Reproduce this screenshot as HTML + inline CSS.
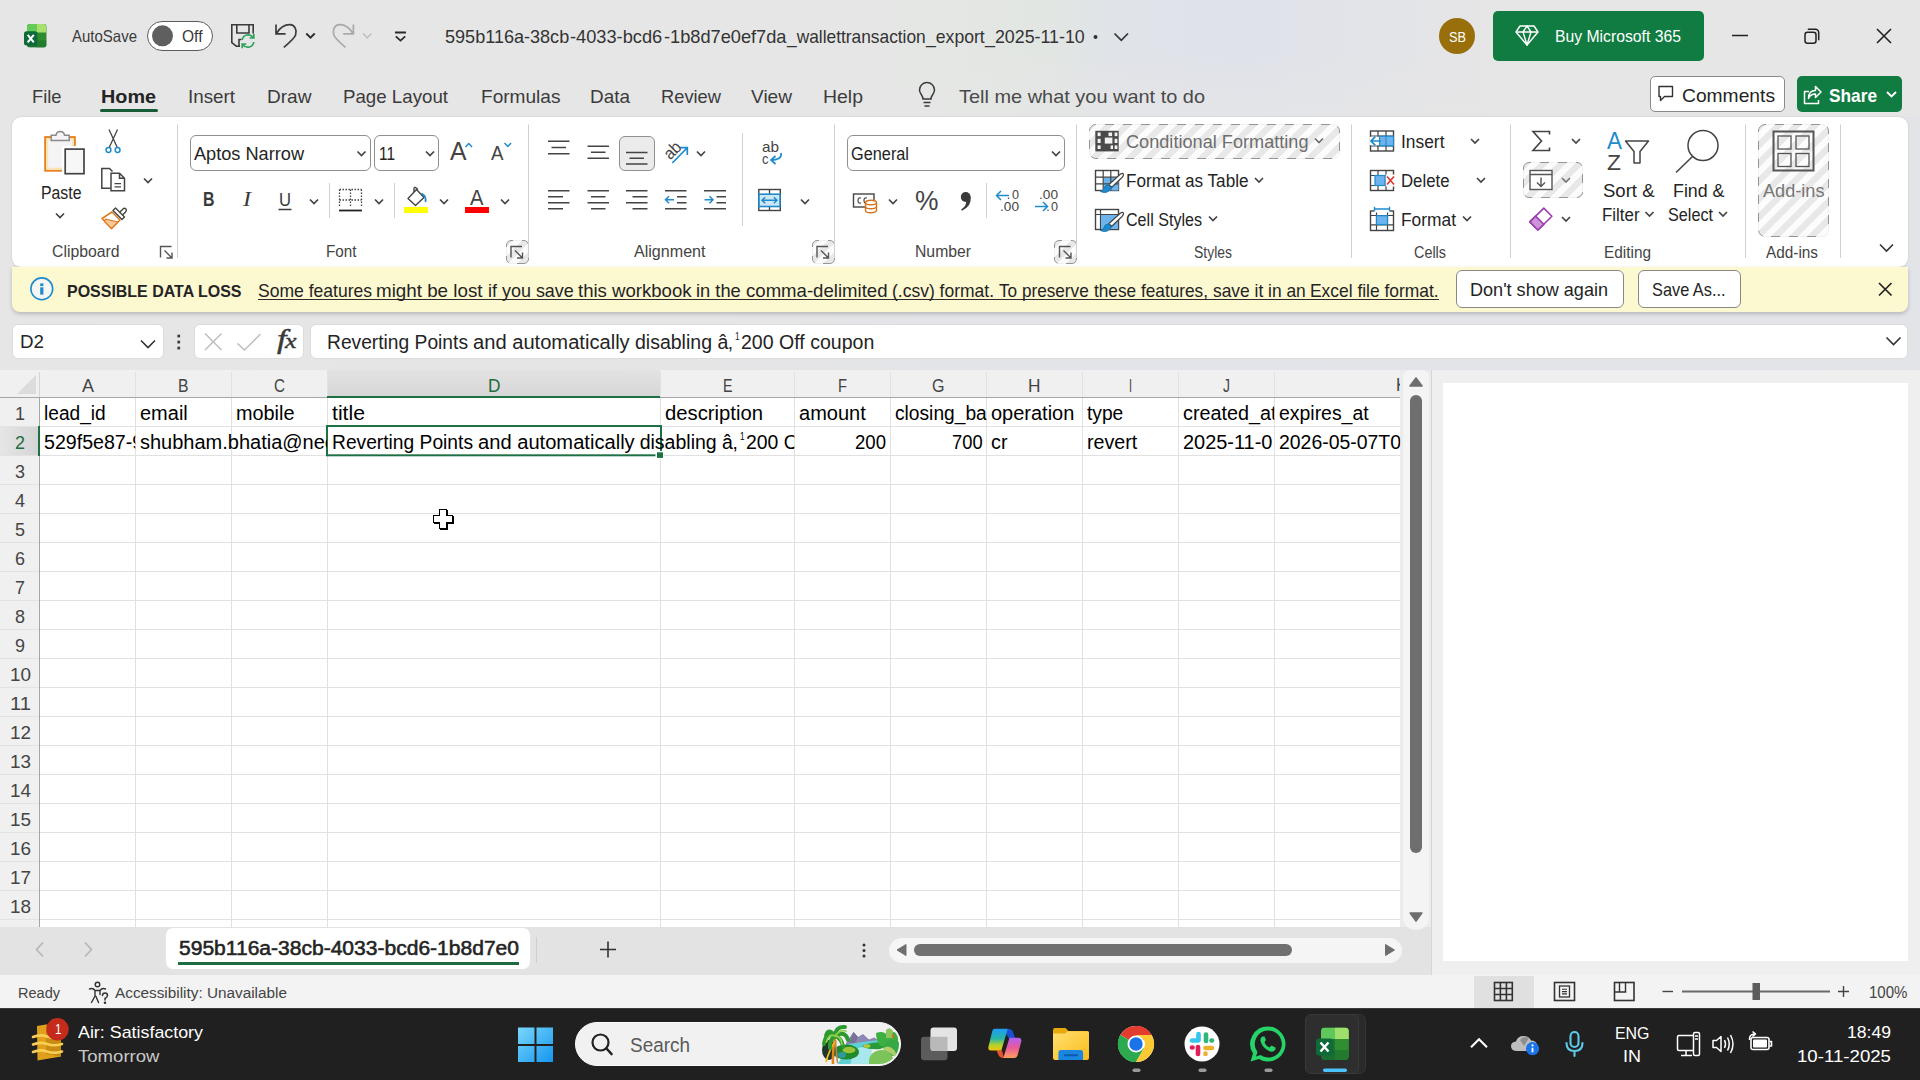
<!DOCTYPE html>
<html><head><meta charset="utf-8"><title>Excel</title>
<style>
html,body{margin:0;padding:0;}
body{width:1920px;height:1080px;overflow:hidden;position:relative;background:linear-gradient(90deg,#e6e6e6 0%,#e5e5e6 35%,#e2e4e9 60%,#e3e4e8 100%);font-family:"Liberation Sans", sans-serif;}
.b{position:absolute;box-sizing:border-box;}
.t{position:absolute;white-space:nowrap;transform-origin:0 50%;font-family:"Liberation Sans", sans-serif;}
svg.ov{position:absolute;left:0;top:0;}
</style></head>
<body>
<div class="b" style="left:0px;top:0px;width:1920px;height:117px;background:linear-gradient(to bottom,rgba(230,230,230,0) 45%,rgba(230,230,230,.6) 100%),linear-gradient(90deg,#e6e6e6 0%,#e6e6e6 44%,#e4e7e4 49%,#e2e6e3 54.5%,#e0e3e8 58%,#dfe2ea 65%,#e3e4e8 72%,#e6e6e6 79%,#e6e6e6 100%);"></div>
<div class="b" style="left:147px;top:21px;width:66px;height:30px;background:#fff;border:1.3px solid #5c5c5c;border-radius:15px;"></div>
<div class="b" style="left:1493px;top:11px;width:211px;height:50px;background:#107c41;border-radius:5px;"></div>
<div class="b" style="left:100px;top:109px;width:58px;height:3px;background:#185c37;border-radius:1.5px;"></div>
<div class="b" style="left:1650px;top:76px;width:135px;height:36px;background:#fff;border:1px solid #8a8a8a;border-radius:5px;"></div>
<div class="b" style="left:1797px;top:76px;width:105px;height:36px;background:#107c41;border-radius:5px;"></div>
<div class="b" style="left:12px;top:117px;width:1896px;height:149.5px;background:#fff;border-radius:9px;box-shadow:0 0 2px rgba(0,0,0,.18);"></div>
<div class="b" style="left:190px;top:135px;width:181px;height:36px;background:#fff;border:1px solid #8f8f8f;border-radius:6px;"></div>
<div class="b" style="left:374px;top:135px;width:65px;height:36px;background:#fff;border:1px solid #8f8f8f;border-radius:6px;"></div>
<div class="b" style="left:404px;top:207px;width:24px;height:6px;background:#ffff00;"></div>
<div class="b" style="left:465px;top:207px;width:24px;height:6px;background:#ff0000;"></div>
<div class="b" style="left:505.5px;top:240.0px;width:23px;height:23.5px;background:#e8e8e8;border:1px solid #969696;border-radius:5px;"></div>
<div class="b" style="left:505.0px;top:239.5px;width:24px;height:24.5px;background:repeating-linear-gradient(135deg,rgba(255,255,255,0) 0 6.2px,rgba(255,255,255,.86) 6.2px 12.7px);border-radius:5px;"></div>
<div class="b" style="left:619px;top:135.5px;width:35.5px;height:35px;background:#ebebeb;border:1px solid #8f8f8f;border-radius:6px;"></div>
<div class="b" style="left:811.5px;top:240.0px;width:23px;height:23.5px;background:#e8e8e8;border:1px solid #969696;border-radius:5px;"></div>
<div class="b" style="left:811.0px;top:239.5px;width:24px;height:24.5px;background:repeating-linear-gradient(135deg,rgba(255,255,255,0) 0 6.2px,rgba(255,255,255,.86) 6.2px 12.7px);border-radius:5px;"></div>
<div class="b" style="left:847px;top:135px;width:218px;height:36px;background:#fff;border:1px solid #8f8f8f;border-radius:6px;"></div>
<div class="b" style="left:1054.0px;top:240.0px;width:23px;height:23.5px;background:#e8e8e8;border:1px solid #969696;border-radius:5px;"></div>
<div class="b" style="left:1053.5px;top:239.5px;width:24px;height:24.5px;background:repeating-linear-gradient(135deg,rgba(255,255,255,0) 0 6.2px,rgba(255,255,255,.86) 6.2px 12.7px);border-radius:5px;"></div>
<div class="b" style="left:1089px;top:123.5px;width:251px;height:35.5px;background:#e8e8e8;border:1px solid #969696;border-radius:7px;"></div>
<div class="b" style="left:1088.5px;top:123.0px;width:252px;height:36.5px;background:repeating-linear-gradient(135deg,rgba(255,255,255,0) 0 6.2px,rgba(255,255,255,.86) 6.2px 12.7px);border-radius:7px;"></div>
<div class="b" style="left:1523px;top:162px;width:60px;height:35.5px;background:#e8e8e8;border:1px solid #969696;border-radius:6px;"></div>
<div class="b" style="left:1522.5px;top:161.5px;width:61px;height:36.5px;background:repeating-linear-gradient(135deg,rgba(255,255,255,0) 0 6.2px,rgba(255,255,255,.86) 6.2px 12.7px);border-radius:6px;"></div>
<div class="b" style="left:1758px;top:124px;width:71px;height:112.5px;background:#e8e8e8;border:1px solid #969696;border-radius:7px;"></div>
<div class="b" style="left:1757.5px;top:123.5px;width:72px;height:113.5px;background:repeating-linear-gradient(135deg,rgba(255,255,255,0) 0 6.2px,rgba(255,255,255,.86) 6.2px 12.7px);border-radius:7px;"></div>
<div class="b" style="left:12px;top:267px;width:1896px;height:44.5px;background:#fcf8d0;border-radius:0 0 8px 8px;box-shadow:0 2px 4px rgba(0,0,0,.20);"></div>
<div class="b" style="left:257.5px;top:298.6px;width:1181.2px;height:1.4px;background:#2a2a2a;"></div>
<div class="b" style="left:1456px;top:270.3px;width:167.5px;height:38.2px;background:#fff;border:1px solid #8a8886;border-radius:6px;"></div>
<div class="b" style="left:1638px;top:270.3px;width:102.5px;height:38.2px;background:#fff;border:1px solid #8a8886;border-radius:6px;"></div>
<div class="b" style="left:12px;top:323.5px;width:152px;height:35.5px;background:#fff;border:1px solid #dcdcdc;border-radius:6px;"></div>
<div class="b" style="left:194px;top:323.5px;width:110px;height:35.5px;background:#fff;border:1px solid #dcdcdc;border-radius:6px;"></div>
<div class="b" style="left:310px;top:323.5px;width:1598px;height:35.5px;background:#fff;border:1px solid #dcdcdc;border-radius:6px;"></div>
<div class="b" style="left:0px;top:370px;width:1400px;height:557px;background:#fff;"></div>
<div class="b" style="left:0px;top:370px;width:1400px;height:27.5px;background:#f0f0f0;"></div>
<div class="b" style="left:0px;top:397px;width:39px;height:530px;background:#f0f0f0;"></div>
<div class="b" style="left:327px;top:370px;width:333px;height:27px;background:linear-gradient(#e3e3e3,#d6d6d6);"></div>
<div class="b" style="left:0px;top:426.5px;width:39px;height:29px;background:linear-gradient(90deg,#e6e6e6,#d4d4d4);"></div>
<div class="b" style="left:1390px;top:370px;width:10px;height:26px;overflow:hidden;"><span class="t" style="left:5.5px;top:6.3px;font-size:18.5px;line-height:18.5px;color:#444;transform:scaleX(.9);">K</span></div>
<div class="b" style="left:1400px;top:369.5px;width:31.5px;height:557.5px;background:#ebebec;"></div>
<div class="b" style="left:1402.5px;top:369.5px;width:26.3px;height:560.3px;background:#f4f4f4;border-radius:7px 7px 13px 13px;"></div>
<div class="b" style="left:1410px;top:395px;width:12px;height:457.5px;background:#6e6e6e;border-radius:6px;"></div>
<div class="b" style="left:1432px;top:370px;width:488px;height:605px;background:#efefef;"></div>
<div class="b" style="left:1443px;top:383px;width:465px;height:578px;background:#fff;"></div>
<div class="b" style="left:0px;top:927px;width:1431px;height:48px;background:#e3e3e3;"></div>
<div class="b" style="left:1402.5px;top:900px;width:26.3px;height:29.8px;background:#f4f4f4;border-radius:0 0 13px 13px;"></div>
<div class="b" style="left:166px;top:927.5px;width:364px;height:41px;background:#fff;border-radius:7px;"></div>
<div class="b" style="left:178px;top:962px;width:340.5px;height:2.5px;background:#1d6b40;"></div>
<div class="b" style="left:889px;top:937.5px;width:513px;height:25px;background:#f5f5f5;border-radius:12.5px;"></div>
<div class="b" style="left:914px;top:943.8px;width:378px;height:12.4px;background:#707070;border-radius:6.2px;"></div>
<div class="b" style="left:0px;top:975px;width:1920px;height:33.5px;background:#f3f3f3;"></div>
<div class="b" style="left:1474px;top:976px;width:59.5px;height:32px;background:#e0e0e0;"></div>
<div class="b" style="left:0px;top:1008px;width:1920px;height:72px;background:#202020;"></div>
<div class="b" style="left:0px;top:1008px;width:1920px;height:1px;background:#3a3a3a;"></div>
<div class="b" style="left:575px;top:1022px;width:326px;height:44px;background:#f1f1f1;border:1.5px solid #fbfbfb;border-radius:22px;"></div>
<div class="b" style="left:1313px;top:1014px;width:52.5px;height:59.5px;background:#2a2a2a;border:1px solid #343434;border-radius:6px;"></div>
<div class="b" style="left:1305px;top:1014px;width:53.5px;height:59.5px;background:#2e2e2e;border:1px solid #3a3a3a;border-radius:6px;"></div>
<svg class="ov" width="1920" height="1080" viewBox="0 0 1920 1080">
<g><defs><clipPath id="xl"><rect x="27" y="24" width="19.500" height="23.500" rx="3"/></clipPath></defs><g clip-path="url(#xl)"><rect x="27" y="24" width="19.500" height="23.500" fill="#1f7534"/><rect x="36.500" y="24" width="10" height="23.500" fill="#2e8c2d"/><rect x="27" y="24" width="9.500" height="8.500" fill="#62cc5a"/><rect x="36.500" y="24" width="10" height="8.500" fill="#a6e16b"/><rect x="27" y="40.500" width="19.500" height="7" fill="#1c6f30" opacity=".55"/></g><rect x="24" y="31.300" width="13.500" height="14.300" rx="2.500" fill="#0e6a3a"/><path d="M27.700 34.800 L33.800 42.300 M33.800 34.800 L27.700 42.300" stroke="#fff" stroke-width="2" fill="none"/></g>
<circle cx="162.500" cy="35.800" r="10.500" fill="#5f5f5f"/>
<g fill="none" stroke="#3b3b3b" stroke-width="1.600" stroke-linejoin="miter"><path d="M240 46.200 H236.300 L231.800 42.600 V24.800 H253.200 V33.500"/><path d="M236.800 24.800 V33 H249 V24.800"/><path d="M239 46.200 V39.500 H241.500"/></g><g fill="none" stroke="#2ea25a" stroke-width="1.700"><path d="M242.200 40 A6 6 0 0 1 253 37.300 M253.800 33.800 V38 H249.600"/><path d="M253.800 42 A6 6 0 0 1 243 44.700 M242.200 48.200 V44 H246.400"/></g>
<path d="M276 24.400 V33.800 H285.600 M276.800 33 C280.500 27 286 24.600 290 24.700 C294.800 25 297.300 30 295.600 35 C294.500 38.200 290 42.200 283.800 47.300" fill="none" stroke="#3b3b3b" stroke-width="1.700"/>
<path d="M306.300 33.500 L310.500 37.700 L314.700 33.500" fill="none" stroke="#2b2b2b" stroke-width="1.800"/>
<path d="M353.400 24.400 V33.800 H343.200 M352.600 33 C348.900 27 343.400 24.600 339.400 24.700 C334.600 25 332.100 30 333.800 35 C334.900 38.200 339.400 42.200 345.500 47.300" fill="none" stroke="#a9a9a9" stroke-width="1.700"/>
<path d="M363 33.500 L367.200 37.700 L371.400 33.500" fill="none" stroke="#c2c2c2" stroke-width="1.700"/>
<path d="M395 32.500 H406 M395.800 36.300 L400.500 40.600 L405.200 36.300" fill="none" stroke="#2b2b2b" stroke-width="1.800"/>
<circle cx="1095.500" cy="37" r="2" fill="#333"/>
<path d="M1114.500 33.500 L1121.300 40.300 L1128 33.500" fill="none" stroke="#333" stroke-width="1.7"/>
<circle cx="1457" cy="36" r="18" fill="#986f0b"/>
<g fill="none" stroke="#fff" stroke-width="1.4" stroke-linejoin="round"><path d="M1520 26 H1534 L1538 32 L1527 45 L1516 32 Z"/><path d="M1516 32 H1538 M1523 32 L1527 26 L1531 32 M1523 32 L1527 45 L1531 32"/></g>
<path d="M1732 35.5 H1748" stroke="#222" stroke-width="1.5"/>
<g fill="none" stroke="#222" stroke-width="1.5"><rect x="1805" y="32.200" width="11" height="11" rx="2.500"/><path d="M1807.800 29.300 H1815.500 A3.200 3.200 0 0 1 1818.700 32.500 V40.200"/></g>
<path d="M1877 29 L1891 43 M1891 29 L1877 43" stroke="#222" stroke-width="1.6"/>
<g transform="translate(0,1)" fill="none" stroke="#3b3b3b" stroke-width="1.5"><path d="M923 98 C923 94 919.5 93 919.5 89 A7.5 7.5 0 0 1 934.5 89 C934.5 93 931 94 931 98 Z"/><path d="M923.5 101.5 H930.5 M924.5 105 H929.5"/></g>
<path d="M1659 86.5 H1672.5 V96.5 H1664.5 L1660.5 100.5 V96.5 H1659 Z" fill="none" stroke="#333" stroke-width="1.4" stroke-linejoin="round"/>
<g fill="none" stroke="#fff" stroke-width="1.5" stroke-linejoin="round"><path d="M1809 91.500 H1804.500 V103.500 H1818.500 V100"/><path d="M1808.500 98.500 C1808.500 93 1811.500 90.500 1815.500 90.500 V86.500 L1821 92 L1815.500 97.500 V94 C1812.500 94 1810 95 1808.500 98.500 Z"/></g>
<path d="M1887 92 L1891.5 96.5 L1896 92" fill="none" stroke="#fff" stroke-width="1.8"/>
<g><rect x="45.2" y="137.1" width="29.6" height="33.6" fill="#f4f4f6" stroke="#e8821e" stroke-width="2"/><rect x="47.2" y="139.1" width="25.6" height="29.6" fill="none" stroke="#fbe4b4" stroke-width="2"/><path d="M51.2 140.600 V135.200 H56 A4.300 4.300 0 0 1 64.500 135.200 H69.200 V140.600 Z" fill="#f4f4f6" stroke="#8a8a8a" stroke-width="1.500"/><rect x="62" y="146" width="25" height="30" fill="#fff"/><rect x="65.2" y="149.1" width="18.800" height="24.600" fill="#f7f7f8" stroke="#444" stroke-width="1.700"/></g>
<path d="M56 213.5 L60 217.5 L64 213.5" fill="none" stroke="#444" stroke-width="1.7"/>
<g fill="none" stroke-width="1.5"><path d="M109 129.500 L117.300 147.500 M117.500 129.500 L109.200 147.500" stroke="#444" stroke-width="1.300"/><circle cx="108.500" cy="150" r="2.400" stroke="#1e8bcd"/><circle cx="117.600" cy="150" r="2.400" stroke="#1e8bcd"/></g>
<g fill="none" stroke="#444" stroke-width="1.500"><path d="M110.500 188.300 H101.800 V168.500 H109.500 L112.500 171.500"/><path d="M111 173.200 H119.500 L124.500 178.200 V190.800 H111 Z M119.500 173.200 V178.200 H124.500" fill="#fff"/><path d="M114.500 183.600 H121 M114.500 186.800 H121" stroke-width="1.300"/></g>
<path d="M144 178.5 L148 182.5 L152 178.5" fill="none" stroke="#444" stroke-width="1.7"/>
<g stroke-linejoin="round"><path d="M112 212 L120 220 L111.500 228.500 L102 218.500 Z" fill="#fff" stroke="#e07a1c" stroke-width="1.500"/><path d="M105.500 219 L118 222 L111.500 228.500 L104.500 221.500 Z" fill="#f8c79a" stroke="#e07a1c" stroke-width="1.200"/><path d="M118.500 213.500 L123 209 Q124.500 207.500 126 209 Q127 210.500 125.500 212 L121 216.500" fill="#fff" stroke="#444" stroke-width="1.400"/><path d="M113 210.500 L115.500 208 L124.500 217 L122 219.500 Z" fill="#fff" stroke="#444" stroke-width="1.400"/></g>
<path d="M160.5 257.5 V246.5 H171.5 M164.5 250.5 L171.5 257.5 M166.5 258.0 H172.0 V252.5" fill="none" stroke="#555" stroke-width="1.4"/>
<path d="M177.5 124.5 V258" stroke="#d1d1d1" stroke-width="1"/>
<path d="M357.5 151.5 L361.5 155.5 L365.5 151.5" fill="none" stroke="#444" stroke-width="1.7"/>
<path d="M426 151.5 L430 155.5 L434 151.5" fill="none" stroke="#444" stroke-width="1.7"/>
<path d="M465.5 147 L468.800 143.500 L472 147" fill="none" stroke="#1e8bcd" stroke-width="1.5"/>
<path d="M504.5 143 L507.800 146.500 L511 143" fill="none" stroke="#1e8bcd" stroke-width="1.5"/>
<path d="M278.5 209.500 H291.500" stroke="#3a3a3a" stroke-width="1.5"/>
<path d="M310 199.5 L314 203.5 L318 199.5" fill="none" stroke="#444" stroke-width="1.7"/>
<path d="M329.5 183 V218" stroke="#d1d1d1" stroke-width="1"/>
<g fill="none" stroke="#444"><path d="M339.500 189.500 H361.500 M339.500 189.500 V207 M361.500 189.500 V207 M350.500 189.500 V207 M339.500 200 H361.500" stroke-width="1.3" stroke-dasharray="1.5 1.5"/><path d="M339 210.500 H362" stroke-width="1.800" stroke="#222"/></g>
<path d="M375 199.5 L379 203.5 L383 199.5" fill="none" stroke="#444" stroke-width="1.7"/>
<path d="M394.5 183 V218" stroke="#d1d1d1" stroke-width="1"/>
<g fill="none" stroke="#444" stroke-width="1.4" stroke-linejoin="round"><path d="M408 198.500 L416.500 189.500 L424 197.500 L415.500 205.500 Z" fill="#fff"/><path d="M414 192 V188.500 Q414 187 415.500 187.500 L418 189.500"/></g><path d="M421.5 193.500 Q426.500 195.500 425.500 202" fill="none" stroke="#1e8bcd" stroke-width="1.800"/>
<path d="M440 199.5 L444 203.5 L448 199.5" fill="none" stroke="#444" stroke-width="1.7"/>
<path d="M501 199.5 L505 203.5 L509 199.5" fill="none" stroke="#444" stroke-width="1.7"/>
<path d="M511 257.5 V246.5 H522 M515 250.5 L522 257.5 M517 258.0 H522.5 V252.5" fill="none" stroke="#555" stroke-width="1.4"/>
<path d="M528.5 124.5 V258" stroke="#d1d1d1" stroke-width="1"/>
<path d="M548 141.2 H569.5 M551.5 147.5 H566 M548 153.8 H569.5 " fill="none" stroke="#444" stroke-width="1.5"/>
<path d="M587.5 146.2 H609 M591 152.2 H605.5 M587.5 158.2 H609 " fill="none" stroke="#444" stroke-width="1.5"/>
<path d="M626 152.5 H647.5 M629.5 158.2 H644 M626 164 H647.5 " fill="none" stroke="#444" stroke-width="1.5"/>
<path d="M672.300 163 L687 148 M680 147.700 H687.300 V155" fill="none" stroke="#1e8bcd" stroke-width="1.700"/>
<path d="M697 151.5 L701 155.5 L705 151.5" fill="none" stroke="#444" stroke-width="1.7"/>
<path d="M548 190.8 H569.5 M548 196.8 H563 M548 202.8 H569.5 M548 208.8 H563 " fill="none" stroke="#444" stroke-width="1.5"/>
<path d="M587.5 190.8 H609 M591 196.8 H605.5 M587.5 202.8 H609 M591 208.8 H605.5 " fill="none" stroke="#444" stroke-width="1.5"/>
<path d="M626 190.8 H647.5 M632.5 196.8 H647.5 M626 202.8 H647.5 M632.5 208.8 H647.5 " fill="none" stroke="#444" stroke-width="1.5"/>
<path d="M665 190.8 H686.5 M677 196.8 H686.5 M677 202.8 H686.5 M665 208.8 H686.5 " fill="none" stroke="#444" stroke-width="1.5"/>
<path d="M665.5 199.800 H674 M669 196.300 L665.500 199.800 L669 203.300" fill="none" stroke="#1e8bcd" stroke-width="1.5"/>
<path d="M704 190.8 H726 M716.5 196.8 H726 M716.5 202.8 H726 M704 208.8 H726 " fill="none" stroke="#444" stroke-width="1.5"/>
<path d="M704.5 199.800 H713 M709.500 196.300 L713 199.800 L709.500 203.300" fill="none" stroke="#1e8bcd" stroke-width="1.5"/>
<path d="M742.5 133 V226" stroke="#d1d1d1" stroke-width="1"/>
<path d="M781 153 Q782.500 159.500 771.500 160 M775.500 156 L771 160 L775.500 164" fill="none" stroke="#1e8bcd" stroke-width="1.700"/>
<g fill="none"><rect x="758.800" y="189.500" width="21.500" height="21" stroke="#444" stroke-width="1.4"/><path d="M769.500 189.500 V194 M769.500 206.500 V210.500" stroke="#444" stroke-width="1.3"/><rect x="759" y="194.200" width="21" height="12.300" fill="#cfe6f7" stroke="#1e8bcd" stroke-width="1.600"/><path d="M762 200.300 H777 M765.200 197.300 L762 200.300 L765.200 203.300 M773.800 197.300 L777 200.300 L773.800 203.300" stroke="#1e8bcd" stroke-width="1.500"/></g>
<path d="M801 199.5 L805 203.5 L809 199.5" fill="none" stroke="#444" stroke-width="1.7"/>
<path d="M817 257.5 V246.5 H828 M821 250.5 L828 257.5 M823 258.0 H828.5 V252.5" fill="none" stroke="#555" stroke-width="1.4"/>
<path d="M834.5 124.5 V258" stroke="#d1d1d1" stroke-width="1"/>
<path d="M1052 151.5 L1056 155.5 L1060 151.5" fill="none" stroke="#444" stroke-width="1.7"/>
<g fill="none"><rect x="853.500" y="194" width="20.500" height="13" stroke="#444" stroke-width="1.4"/><path d="M861 198 Q858 197 858 200.500 Q858 204 861 203 M867 198 Q864 197 864 200.500 Q864 204 867 203" stroke="#444" stroke-width="1.2"/><path d="M865.500 202.500 V210.500 A5.500 2.300 0 0 0 876.500 210.500 V202.500" fill="#fff" stroke="#d9731b" stroke-width="1.4"/><ellipse cx="871" cy="202.500" rx="5.500" ry="2.300" fill="#fff" stroke="#d9731b" stroke-width="1.4"/><path d="M865.500 206.500 A5.500 2.300 0 0 0 876.500 206.500" stroke="#d9731b" stroke-width="1.4"/></g>
<path d="M889 199.5 L893 203.5 L897 199.5" fill="none" stroke="#444" stroke-width="1.7"/>
<circle cx="965.700" cy="197" r="4.900" fill="#3a3a3a"/><path d="M970.600 196.500 Q972 206 961.800 210.800 L961.200 209.600 Q967.500 205.500 966 199 Z" fill="#3a3a3a"/>
<path d="M986.5 183 V218" stroke="#d1d1d1" stroke-width="1"/>
<path d="M996.500 195.500 H1009 M1001 191 L996.500 195.500 L1001 200" fill="none" stroke="#1e8bcd" stroke-width="1.5"/><circle cx="1008.500" cy="198.200" r="0.8" fill="#444"/>
<path d="M1035 206.500 H1047.500 M1043 202 L1047.500 206.500 L1043 211" fill="none" stroke="#1e8bcd" stroke-width="1.5"/><circle cx="1048" cy="210.200" r="0.8" fill="#444"/>
<path d="M1059.5 257.5 V246.5 H1070.5 M1063.5 250.5 L1070.5 257.5 M1065.5 258.0 H1071.0 V252.5" fill="none" stroke="#555" stroke-width="1.4"/>
<path d="M1076.5 124.5 V258" stroke="#d1d1d1" stroke-width="1"/>
<g><rect x="1095.300" y="130.800" width="23.400" height="20.600" fill="#4a4a4a"/><rect x="1097.6" y="132.5" width="3" height="3.6" fill="#f2f2f2"/><rect x="1097.6" y="138.8" width="3" height="4.2" fill="#f2f2f2"/><rect x="1097.6" y="145.4" width="3" height="3.6" fill="#f2f2f2"/><rect x="1114.6" y="132.5" width="2.8" height="3.6" fill="#f2f2f2"/><rect x="1114.6" y="138.8" width="2.8" height="4.2" fill="#f2f2f2"/><rect x="1114.6" y="145.4" width="2.8" height="3.6" fill="#f2f2f2"/><rect x="1108.5" y="132.5" width="3.6" height="3.6" fill="#f2f2f2"/><rect x="1104.8" y="137.6" width="7.6" height="6" fill="#f2f2f2"/><rect x="1110.6" y="145.4" width="2.4" height="3.6" fill="#f2f2f2"/></g>
<path d="M1315 138.5 L1319 142.5 L1323 138.5" fill="none" stroke="#6e6e6e" stroke-width="1.7"/>
<g><rect x="1095.5" y="170.5" width="23" height="20" fill="#fff" stroke="#444" stroke-width="1.4"/><rect x="1103.5" y="177.5" width="15" height="13" fill="#6db3ee"/><path d="M1095.5 177.1 H1118.5 M1095.5 183.8 H1118.5 M1103.2 170.5 V190.5 M1110.8 170.5 V190.5" stroke="#444" stroke-width="1.2" fill="none"/></g>
<g><path d="M1109.0 184.5 L1120.5 174.0 Q1123.0 172.5 1123.5 174.5 Q1123.5 176.0 1122.0 177.5 L1111.5 187.5 Z" fill="#fff" stroke="#444" stroke-width="1.2" stroke-linejoin="round"/><path d="M1108.5 185.0 Q1104.5 185.0 1104.0 188.5 Q1103.5 191.0 1100.5 191.5 Q1107.5 194.5 1111.5 188.0 Z" fill="#1e8bcd" stroke="#1a78b3" stroke-width="1"/></g>
<path d="M1255 178.0 L1259 182.0 L1263 178.0" fill="none" stroke="#444" stroke-width="1.7"/>
<g><rect x="1095.500" y="209.500" width="23" height="20" fill="#fff" stroke="#444" stroke-width="1.4"/><path d="M1095.500 214.500 H1118.500 M1100.500 209.500 V229.500" stroke="#444" stroke-width="1.2"/><rect x="1101" y="215" width="17" height="14" fill="#6db3ee"/></g>
<g><path d="M1109.0 223.5 L1120.5 213.0 Q1123.0 211.5 1123.5 213.5 Q1123.5 215.0 1122.0 216.5 L1111.5 226.5 Z" fill="#fff" stroke="#444" stroke-width="1.2" stroke-linejoin="round"/><path d="M1108.5 224.0 Q1104.5 224.0 1104.0 227.5 Q1103.5 230.0 1100.5 230.5 Q1107.5 233.5 1111.5 227.0 Z" fill="#1e8bcd" stroke="#1a78b3" stroke-width="1"/></g>
<path d="M1209 216.5 L1213 220.5 L1217 216.5" fill="none" stroke="#444" stroke-width="1.7"/>
<path d="M1351.5 124.5 V258" stroke="#d1d1d1" stroke-width="1"/>
<g fill="none" stroke="#444"><rect x="1370.5" y="131" width="23" height="20" stroke-width="1.4" fill="#fff"/><path d="M1370.5 136 H1393.5 M1370.5 146 H1393.5 M1378.0 131 V151 M1386.0 131 V151" stroke-width="1.2"/></g>
<rect x="1379.500" y="136.200" width="14" height="9.600" fill="#6db3ee" stroke="#1e8bcd" stroke-width="1.200"/><path d="M1386 136.200 V145.800" stroke="#1e8bcd" stroke-width="1"/><rect x="1369.500" y="136.800" width="9.400" height="8.400" fill="#fff"/><path d="M1371 141 H1381 M1375.300 136.700 L1371 141 L1375.300 145.300" fill="none" stroke="#1e8bcd" stroke-width="1.700"/><path d="M1370 134 H1377 V148 H1370 Z" fill="#fff" stroke="none" opacity="0"/>
<path d="M1471 139.0 L1475 143.0 L1479 139.0" fill="none" stroke="#444" stroke-width="1.7"/>
<g fill="none" stroke="#444"><rect x="1370.5" y="170.5" width="23" height="20" stroke-width="1.4" fill="#fff"/><path d="M1370.5 175.5 H1393.5 M1370.5 185.5 H1393.5 M1378.0 170.5 V190.5 M1386.0 170.5 V190.5" stroke-width="1.2"/></g>
<rect x="1375" y="175.500" width="10" height="10" fill="#6db3ee" stroke="#1e8bcd" stroke-width="1.2"/><rect x="1385.800" y="174.500" width="9" height="12" fill="#fff"/><path d="M1387 176.500 L1394 184.500 M1394 176.500 L1387 184.500" stroke="#e0362c" stroke-width="1.6" fill="none"/>
<path d="M1477 178.0 L1481 182.0 L1485 178.0" fill="none" stroke="#444" stroke-width="1.7"/>
<g fill="none" stroke="#444"><rect x="1370.500" y="211" width="23" height="19.500" stroke-width="1.4" fill="#fff"/><path d="M1370.500 215.500 H1393.500 M1370.500 224.800 H1393.500 M1376.500 211 V230.500 M1387.500 211 V230.500" stroke-width="1.2"/></g><rect x="1374.200" y="209.500" width="15.600" height="3" fill="#fff"/><rect x="1376.500" y="215.700" width="11" height="8.800" fill="#6db3ee" stroke="#1e8bcd" stroke-width="1.200"/><path d="M1374.500 209 H1389.500 M1374.500 206.800 V211.200 M1389.500 206.800 V211.200" stroke="#1e8bcd" stroke-width="1.400" fill="none"/>
<path d="M1463 216.5 L1467 220.5 L1471 216.5" fill="none" stroke="#444" stroke-width="1.7"/>
<path d="M1510.5 124.5 V258" stroke="#d1d1d1" stroke-width="1"/>
<path d="M1549.500 134.500 V131.500 H1533 L1541.500 141 L1533 150.500 H1549.500 V147.500" fill="none" stroke="#444" stroke-width="1.600" stroke-linejoin="miter"/>
<path d="M1572 139.0 L1576 143.0 L1580 139.0" fill="none" stroke="#444" stroke-width="1.7"/>
<g fill="none" stroke="#555" stroke-width="1.4"><rect x="1530" y="170.500" width="22" height="19" fill="#fff"/><path d="M1530 174.500 H1552 M1541 177.500 V186 M1537 182.500 L1541 186.500 L1545 182.500"/></g>
<path d="M1562 178.0 L1566 182.0 L1570 178.0" fill="none" stroke="#777" stroke-width="1.7"/>
<g stroke-linejoin="round"><path d="M1529.800 221.900 L1543.800 208.100 L1551.900 216.300 L1537.900 230 Z" fill="#fff" stroke="#9b3db0" stroke-width="1.600"/><path d="M1529.800 221.900 L1535.600 216.100 L1543.800 224.300 L1537.900 230 Z" fill="#cf93da" stroke="#9b3db0" stroke-width="1.600"/></g>
<path d="M1562 217.0 L1566 221.0 L1570 217.0" fill="none" stroke="#444" stroke-width="1.7"/>
<path d="M1625.500 141 H1648.500 L1640 151.500 V163 H1634 V151.500 Z" fill="#fff" stroke="#444" stroke-width="1.5" stroke-linejoin="round"/>
<path d="M1645.5 212.0 L1649.5 216.0 L1653.5 212.0" fill="none" stroke="#444" stroke-width="1.7"/>
<circle cx="1703" cy="145.500" r="15" fill="none" stroke="#444" stroke-width="1.500"/><path d="M1692.500 156.500 L1676 172.500" stroke="#444" stroke-width="1.600"/>
<path d="M1719 212.0 L1723 216.0 L1727 212.0" fill="none" stroke="#444" stroke-width="1.7"/>
<path d="M1745.5 124.5 V258" stroke="#d1d1d1" stroke-width="1"/>
<g fill="none" stroke="#555"><rect x="1773.500" y="131.500" width="40" height="39" stroke-width="2"/><rect x="1778" y="136" width="13" height="13" stroke-width="1.300"/><rect x="1796" y="136" width="13" height="13" stroke-width="1.300"/><rect x="1778" y="153.500" width="13" height="13" stroke-width="1.300"/><rect x="1796" y="153.500" width="13" height="13" stroke-width="1.300"/></g>
<path d="M1840.5 124.5 V258" stroke="#d1d1d1" stroke-width="1"/>
<path d="M1880 244.500 L1886.500 251 L1893 244.500" fill="none" stroke="#333" stroke-width="1.600"/>
<circle cx="41.800" cy="288.800" r="10.900" fill="#f6f6f2" stroke="#1e8bcd" stroke-width="1.600"/><rect x="40.200" y="287.300" width="3.200" height="7.300" fill="#1e8bcd"/><rect x="40.200" y="283.400" width="3.200" height="2.700" fill="#1e8bcd"/>
<path d="M1879 283 L1891.500 295.500 M1891.500 283 L1879 295.500" stroke="#222" stroke-width="1.700"/>
<path d="M141 340.500 L148 347.500 L155 340.500" fill="none" stroke="#333" stroke-width="1.600"/>
<rect x="177.400" y="334.700" width="2.700" height="2.700" fill="#3a3a3a"/><rect x="177.400" y="340.700" width="2.700" height="2.700" fill="#3a3a3a"/><rect x="177.400" y="346.700" width="2.700" height="2.700" fill="#3a3a3a"/>
<path d="M205 333.500 L221.500 350 M221.500 333.500 L205 350" stroke="#bdbdbd" stroke-width="1.500"/><path d="M237.500 343.500 L244.500 350 L260.500 334" fill="none" stroke="#bdbdbd" stroke-width="1.500"/>
<path d="M1886.500 337.500 L1893.500 344.500 L1900.500 337.500" fill="none" stroke="#333" stroke-width="1.600"/>
<path d="M36 375 V394 H17 Z" fill="#dcdcdc"/>
<path d="M39 426.5 H1400 M39 455.5 H1400 M39 484.5 H1400 M39 513.5 H1400 M39 542.5 H1400 M39 571.5 H1400 M39 600.5 H1400 M39 629.5 H1400 M39 658.5 H1400 M39 687.5 H1400 M39 716.5 H1400 M39 745.5 H1400 M39 774.5 H1400 M39 803.5 H1400 M39 832.5 H1400 M39 861.5 H1400 M39 890.5 H1400 M39 919.5 H1400 M135.5 397 V927 M231.5 397 V927 M327.5 397 V927 M660.5 397 V927 M794.5 397 V927 M890.5 397 V927 M986.5 397 V927 M1082.5 397 V927 M1178.5 397 V927 M1274.5 397 V927 " stroke="#e1e1e1" stroke-width="1" fill="none"/>
<path d="M135.5 372 V397 M231.5 372 V397 M327.5 372 V397 M660.5 372 V397 M794.5 372 V397 M890.5 372 V397 M986.5 372 V397 M1082.5 372 V397 M1178.5 372 V397 M1274.5 372 V397 M0 426.5 H39 M0 455.5 H39 M0 484.5 H39 M0 513.5 H39 M0 542.5 H39 M0 571.5 H39 M0 600.5 H39 M0 629.5 H39 M0 658.5 H39 M0 687.5 H39 M0 716.5 H39 M0 745.5 H39 M0 774.5 H39 M0 803.5 H39 M0 832.5 H39 M0 861.5 H39 M0 890.5 H39 M0 919.5 H39 " stroke="#e2e2e2" stroke-width="1" fill="none"/>
<path d="M0 397.5 H1400 M39.5 397 V927" stroke="#a6a6a6" stroke-width="1" fill="none"/><path d="M39.5 372 V397" stroke="#d4d4d4" stroke-width="1"/>
<path d="M327 397 H660" stroke="#1f7145" stroke-width="2"/>
<path d="M39 426 V456" stroke="#1f7145" stroke-width="2"/>
<rect x="327" y="426" width="334" height="29.3" fill="none" stroke="#1f7145" stroke-width="2"/>
<rect x="655.5" y="451" width="8" height="7.5" fill="#fff"/><rect x="657" y="452.3" width="6" height="5.6" fill="#1f7145"/>
<path d="M439 509 H447 V510 H448 V515 H453 V516 H454 V524 H448 V530 H440 V529 H439 V524 H434 V523 H433 V515 H439 Z" fill="#000"/><path d="M440 510 H446 V516 H452 V522 H446 V528 H440 V522 H434 V516 H440 Z" fill="#fff"/>
<path d="M1410 386 L1416 378 L1422 386 Z" stroke-width="1.600" fill="#6e6e6e" stroke="#6e6e6e" stroke-linejoin="round"/>
<path d="M1410.200 913 L1416 921 L1421.800 913 Z" stroke-width="1.600" fill="#6e6e6e" stroke="#6e6e6e" stroke-linejoin="round"/>
<path d="M1431.500 370 V975" stroke="#d6d6d6" stroke-width="1"/>
<path d="M43 942.500 L36.500 949.500 L43 956.500" fill="none" stroke="#b5b5b5" stroke-width="1.600"/><path d="M85 942.500 L91.500 949.500 L85 956.500" fill="none" stroke="#b5b5b5" stroke-width="1.600"/>
<path d="M536.500 937 V963" stroke="#cfcfcf" stroke-width="1"/>
<path d="M600 949.500 H616 M608 941.500 V957.500" stroke="#333" stroke-width="1.600"/>
<circle cx="864" cy="945" r="1.500" fill="#333"/><circle cx="864" cy="950.500" r="1.500" fill="#333"/><circle cx="864" cy="956" r="1.500" fill="#333"/>
<path d="M906 944.500 L897 950 L906 955.500 Z" fill="#6e6e6e" stroke="#6e6e6e" stroke-width="1" stroke-linejoin="round"/>
<path d="M1385.500 944.500 L1394.500 950 L1385.500 955.500 Z" fill="#6e6e6e" stroke="#6e6e6e" stroke-width="1" stroke-linejoin="round"/>
<g fill="none" stroke="#333" stroke-width="1.400" stroke-linejoin="round" stroke-linecap="round"><circle cx="97.500" cy="984.500" r="2.300"/><path d="M89.500 989 Q93 987.500 95 990.500 H100 Q102 987.500 105.500 989 M95 990.500 V996 L91.500 1002.500 M100 990.500 V994.500 M96 996.500 L98.500 1002.500"/><path d="M102.500 995.500 Q102.500 993 105 993 Q107.500 993 107.500 995.500 Q107.500 997 105 998.500 V1000" stroke-width="1.500"/><circle cx="105" cy="1002.800" r="0.600" fill="#333"/></g>
<g fill="none" stroke="#333" stroke-width="1.600"><rect x="1494.500" y="982.500" width="17.800" height="18"/><path d="M1494.500 988.500 H1512.300 M1494.500 994.500 H1512.300 M1500.400 982.500 V1000.500 M1506.400 982.500 V1000.500"/></g>
<g fill="none" stroke="#333" stroke-width="1.600"><rect x="1554.500" y="982.500" width="20" height="18"/><rect x="1559.500" y="986" width="10" height="11" stroke-width="1.300"/><path d="M1562 989.300 H1567 M1562 991.600 H1567 M1562 993.900 H1567" stroke-width="1.100"/></g>
<g fill="none" stroke="#333" stroke-width="1.600"><rect x="1614.500" y="982.500" width="19.500" height="18"/><path d="M1619.500 982.500 V992 M1625.500 982.500 V992 M1614.500 992 H1626.300" stroke-width="1.400"/></g>
<path d="M1662.500 991.500 H1673" stroke="#444" stroke-width="1.400"/><path d="M1682 991.500 H1830" stroke="#6a6a6a" stroke-width="1.800"/><rect x="1752.500" y="983" width="7.500" height="17" fill="#5c5c5c"/><path d="M1838 991.500 H1849 M1843.500 986 V997" stroke="#444" stroke-width="1.400"/>
<g><path d="M37 1026 L46 1024.500 L61 1028 V1056.500 L37.500 1060.500 Z" fill="#e0a01c"/><path d="M46 1024.500 L61 1028 V1056.500 L46 1054 Z" fill="#c98a12"/><path d="M33 1037 Q40 1034 47 1036.500 T62 1036.500 M33 1044.500 Q40 1041.500 47 1044 T62 1044 M33 1052 Q40 1049 47 1051.500 T62 1051.500" stroke="#f8cf55" stroke-width="2.600" fill="none" stroke-linecap="round"/><circle cx="57.500" cy="1029.300" r="11.200" fill="#c42b1c"/></g>
<defs><linearGradient id="wg" x1="0" y1="0" x2="1" y2="1"><stop offset="0" stop-color="#7ad7fb"/><stop offset="1" stop-color="#1496ef"/></linearGradient></defs><path d="M518 1027.500 H534.500 V1044 H518 Z M536.500 1027.500 H553 V1044 H536.500 Z M518 1046 H534.500 V1062 H518 Z M536.500 1046 H553 V1062 H536.500 Z" fill="url(#wg)"/>
<circle cx="600.500" cy="1042.500" r="8" fill="none" stroke="#222" stroke-width="2.200"/><path d="M606.500 1048.500 L611.500 1054" stroke="#222" stroke-width="2.600" stroke-linecap="round"/>
<g><clipPath id="sa"><rect x="700" y="1024" width="199" height="40" rx="20"/></clipPath><g clip-path="url(#sa)"><path d="M846 1043 L853.500 1032 L858 1037 L863 1034 L869 1039.500 L874 1037.500 L880 1041 V1045 H846 Z" fill="#8e87b3"/><path d="M853.500 1032 L858 1037 L855 1043 H849 Z" fill="#7a7299"/><path d="M849 1044 Q866 1041 884 1039.500 L883 1043 Q868 1046 870 1054 L868 1066 H836 Q846 1052 849 1044 Z" fill="#5fd0d6"/><path d="M858 1048 Q866 1046 872 1050 L870 1066 H850 Q852 1054 858 1048 Z" fill="#a8e8ec"/><ellipse cx="846" cy="1052" rx="13" ry="7.500" fill="#1f8a2c"/><ellipse cx="849" cy="1050" rx="6.500" ry="3.200" fill="#9cc23a"/><ellipse cx="842" cy="1055" rx="4" ry="3" fill="#2e9aa0"/><ellipse cx="829" cy="1050" rx="7" ry="10" fill="#20352a"/><path d="M833 1064 Q832.500 1050 835 1037" stroke="#e0861c" stroke-width="2.600" fill="none"/><path d="M826 1062 Q829 1050 836 1040" stroke="#f0b818" stroke-width="1.800" fill="none"/><path d="M837.500 1063 Q836 1050 835.500 1040" stroke="#b88a5a" stroke-width="1.600" fill="none"/><path d="M835 1036 Q826 1031 824 1044 M835 1036 Q828 1027 826 1036 M835 1036 Q836 1026 845 1027 M835 1036 Q845 1030 848 1040 M835 1036 Q842 1038 843 1047 M835 1036 Q829 1040 830 1048" stroke="#2d9a2f" stroke-width="4" fill="none" stroke-linecap="round"/><path d="M835 1036 Q829 1033 826.500 1042 M835 1036 Q840 1029 846 1031 M835 1036 Q841 1036 842 1044" stroke="#8fcf4a" stroke-width="1.800" fill="none" stroke-linecap="round"/><path d="M862 1046 Q872 1041 884 1043 Q890 1046 880 1049 Q868 1050 862 1046 Z" fill="#2a9a38"/><ellipse cx="867" cy="1046" rx="3.500" ry="1.800" fill="#b8c83a"/><path d="M876 1033 Q884 1030 888 1036 Q894 1028 898 1036 V1046 H880 Q876 1040 876 1033 Z" fill="#3cb043"/><path d="M886 1030 Q890 1026 893 1031 L892 1038 H886 Z" fill="#8cc65a"/><rect x="892.300" y="1034" width="1.800" height="4.500" fill="#d66a1e"/><ellipse cx="893" cy="1048" rx="9" ry="8" fill="#36a844"/><path d="M869 1064 Q868 1052 880 1050 Q888 1049 892 1056 L896 1066 H869 Z" fill="#7cc45a"/><path d="M882 1049 Q888 1044 893 1049 Q897 1052 896 1058 Q890 1052 882 1049 Z" fill="#b0cf6a"/></g></g>
<rect x="921" y="1036.700" width="26.500" height="23.500" rx="3" fill="#5c5c5c"/><rect x="930.500" y="1027.500" width="26.500" height="23.500" rx="3" fill="#e4e4e4"/><path d="M930.500 1036.700 H947.500 V1051 H933.500 Q930.500 1051 930.500 1048 Z" fill="#b9b9b9"/>
<defs><linearGradient id="cpa" x1="0" y1="0" x2="0" y2="1"><stop offset="0" stop-color="#1e9bf2"/><stop offset=".45" stop-color="#27b5a8"/><stop offset=".75" stop-color="#b5d22a"/><stop offset="1" stop-color="#f7c20f"/></linearGradient><linearGradient id="cpb" x1="0" y1="0" x2="0" y2="1"><stop offset="0" stop-color="#b160f2"/><stop offset=".5" stop-color="#ea5a98"/><stop offset="1" stop-color="#ffa05c"/></linearGradient></defs><path d="M1007.800 1028.800 Q1012 1028.800 1013 1032 L1015.200 1038.500 H1009 L1005.500 1033 Z" fill="#1c4fcf"/><path d="M996.500 1050.600 H1002 L1004 1058 Q999.500 1058 998.500 1055 Z" fill="#e8532e"/><path d="M994.500 1028.800 H1007.800 L1001.300 1050.600 H991 Q987.600 1050.300 988.500 1046.500 L992.300 1031 Q993 1028.800 994.500 1028.800 Z" fill="url(#cpa)"/><path d="M1009.500 1037.800 H1018.800 Q1022.200 1038.200 1021.200 1041.800 L1017.500 1055.500 Q1016.600 1058 1014 1058 H1003.300 Z" fill="url(#cpb)"/>
<defs><linearGradient id="fo" x1="0" y1="0" x2="1" y2="1"><stop offset="0" stop-color="#ffdf6e"/><stop offset="1" stop-color="#fbbd1e"/></linearGradient></defs><path d="M1053 1030 Q1053 1028 1055 1028 H1065.500 L1068.500 1031 H1087 Q1089 1031 1089 1033 V1040 H1053 Z" fill="#e8a90c"/><path d="M1053 1033.500 H1065 L1068 1031.200 H1087 Q1089 1031.200 1089 1033.200 V1058 Q1089 1060 1087 1060 H1055 Q1053 1060 1053 1058 Z" fill="url(#fo)"/><path d="M1058.400 1060 V1052.500 Q1058.400 1050 1061 1050 H1080.500 Q1083.100 1050 1083.100 1052.500 V1060 Z" fill="#1a86e0"/><rect x="1064" y="1054.300" width="14" height="2" rx="1" fill="#0d5aa8"/>
<g><circle cx="1136" cy="1044" r="18" fill="#fff"/><path d="M1136 1044 L1120.400 1035 A18 18 0 0 1 1151.600 1035 Z" fill="#e33b2e"/><path d="M1136 1026 A18 18 0 0 1 1151.600 1035 H1136 Z" fill="#e33b2e"/><path d="M1120.400 1035 A18 18 0 0 0 1136 1062 L1143.800 1048.500 L1136 1044 Z" fill="#2da94f"/><path d="M1120.400 1035 L1128.200 1048.500 L1136 1062 A18 18 0 0 1 1120.400 1035 Z" fill="#2da94f"/><path d="M1151.600 1035 A18 18 0 0 1 1136 1062 L1143.800 1048.500 Q1146 1044 1143.800 1039.500 L1136 1035 Z" fill="#fcc934"/><circle cx="1136" cy="1044" r="8.500" fill="#fff"/><circle cx="1136" cy="1044" r="6.700" fill="#1a73e8"/></g>
<rect x="1132.500" y="1068.500" width="8" height="3.500" rx="1.700" fill="#9a9a9a"/>
<g><circle cx="1202" cy="1044" r="17.500" fill="#fff"/><g stroke-width="4.600" stroke-linecap="round" fill="none"><path d="M1198.500 1034 V1040" stroke="#36c5f0"/><path d="M1192 1040.500 H1198" stroke="#36c5f0"/><path d="M1206 1034.500 V1041" stroke="#2eb67d"/><path d="M1211.500 1040.500 H1212" stroke="#2eb67d"/><path d="M1205.500 1048 H1212" stroke="#ecb22e"/><path d="M1205.500 1053.500 V1054" stroke="#ecb22e"/><path d="M1198 1047 V1054" stroke="#e01e5a"/><path d="M1192 1047.500 H1192.500" stroke="#e01e5a"/></g></g>
<rect x="1198.500" y="1068.500" width="8" height="3.500" rx="1.700" fill="#9a9a9a"/>
<g><path d="M1268 1026.500 A17.500 17.500 0 1 1 1259 1059 L1250.500 1061.500 L1253 1053.500 A17.500 17.500 0 0 1 1268 1026.500 Z" fill="#25d366"/><path d="M1268 1030.500 A13.500 13.500 0 1 1 1260.500 1055 L1256 1056.500 L1257.500 1052 A13.500 13.500 0 0 1 1268 1030.500 Z" fill="#202020"/><path d="M1262.500 1036.500 Q1260 1037.500 1260.500 1041 Q1262 1047.500 1269 1051 Q1273 1053 1275.500 1049.500 L1275.500 1047.500 L1271.500 1045.500 L1269.500 1047.500 Q1265.500 1045.500 1264.500 1042 L1266 1040 L1264.500 1036.500 Z" fill="#25d366"/></g>
<rect x="1264.500" y="1068.500" width="8" height="3.500" rx="1.700" fill="#9a9a9a"/>
<g><defs><clipPath id="xt"><rect x="1321" y="1027.500" width="27.800" height="32.500" rx="4"/></clipPath></defs><g clip-path="url(#xt)"><rect x="1321" y="1027.500" width="27.800" height="32.500" fill="#1e7335"/><rect x="1335" y="1027.500" width="14" height="32.500" fill="#2f8f30"/><rect x="1321" y="1027.500" width="14" height="11.500" fill="#5ec85a"/><rect x="1335" y="1027.500" width="14" height="11.500" fill="#a0df6c"/><rect x="1321" y="1050" width="27.800" height="10" fill="#1a6a2e" opacity=".55"/></g><rect x="1316" y="1038.500" width="17" height="17" rx="3" fill="#0f6a3a"/><path d="M1320.500 1042.500 L1328.500 1051.500 M1328.500 1042.500 L1320.500 1051.500" stroke="#fff" stroke-width="2.400"/></g>
<rect x="1323" y="1068.500" width="24" height="3.500" rx="1.700" fill="#4cc2ff"/>
<path d="M1471 1047.300 L1479 1039.300 L1487 1047.300" fill="none" stroke="#fff" stroke-width="2.100"/>
<g><path d="M1517 1051 Q1511 1051 1511 1046 Q1511 1042 1516 1041.500 Q1517.500 1036 1523.500 1036 Q1529 1036 1531 1040.500 Q1537 1040.500 1537 1046 Q1537 1051 1532 1051 Z" fill="#bdbdbd"/><path d="M1520 1040 Q1523 1035.500 1529 1038 L1524 1046 Z" fill="#8e8e8e"/><circle cx="1532.500" cy="1048.700" r="6.600" fill="#1a73e8"/><rect x="1531.600" y="1047.700" width="1.800" height="4.600" fill="#fff"/><circle cx="1532.500" cy="1045.400" r="1.100" fill="#fff"/></g>
<g fill="none" stroke="#5fc9e8" stroke-width="2.100" stroke-linecap="round"><rect x="1570.500" y="1032" width="8" height="15" rx="4"/><path d="M1566.500 1043 Q1566.500 1051 1574.500 1051 Q1582.500 1051 1582.500 1043 M1574.500 1051 V1056"/></g>
<g fill="none" stroke="#fff" stroke-width="1.500"><path d="M1693 1035.500 H1679 Q1677.500 1035.500 1677.500 1037 V1049 Q1677.500 1050.500 1679 1050.500 H1693 M1686 1050.500 V1055 M1681 1055.500 H1692"/><rect x="1693.500" y="1032.500" width="6" height="23" rx="1.500"/><path d="M1695 1036 H1698 M1695 1039 H1698"/></g>
<g fill="none" stroke="#fff" stroke-width="1.500" stroke-linejoin="round"><path d="M1713 1040.500 H1716.500 L1721 1036.500 V1051.500 L1716.500 1047.500 H1713 Z"/><path d="M1724.500 1040 Q1726.500 1044 1724.500 1048 M1727.500 1037.500 Q1731 1044 1727.500 1050.500 M1730.500 1035 Q1735.500 1044 1730.500 1053"/></g>
<g fill="none" stroke="#fff" stroke-width="1.600" stroke-linejoin="round"><rect x="1751" y="1037.500" width="18" height="12" rx="2"/><path d="M1769.500 1041.500 H1771.500 V1046 H1769.500"/><path d="M1749.500 1040 Q1749 1034 1755 1034 M1752.500 1031.500 L1755.500 1034 L1752.500 1036.500" /></g><rect x="1753" y="1039.500" width="14" height="8" rx="1" fill="#fff"/>
</svg>
<span class="t" style="top:28.00px;font-size:16.5px;line-height:16.5px;color:#3a3a3a;left:71.80px;transform:scaleX(0.9083);">AutoSave</span>
<span class="t" style="top:29.00px;font-size:16px;line-height:16px;color:#3a3a3a;left:182.00px;transform:scaleX(0.9740);">Off</span>
<span class="t" style="top:28.00px;font-size:18.5px;line-height:18.5px;color:#333;left:444.50px;transform:scaleX(0.9763);">595b116a-38cb</span>
<span class="t" style="top:28.00px;font-size:18.5px;line-height:18.5px;color:#333;left:570.30px;transform:scaleX(0.9851);">-4033-bcd6</span>
<span class="t" style="top:28.00px;font-size:18.5px;line-height:18.5px;color:#333;left:663.75px;transform:scaleX(0.9841);">-1b8d7e0ef7da</span>
<span class="t" style="top:28.00px;font-size:18.5px;line-height:18.5px;color:#333;left:787.00px;transform:scaleX(0.9369);">_wallettransaction</span>
<span class="t" style="top:28.00px;font-size:18.5px;line-height:18.5px;color:#333;left:925.75px;transform:scaleX(0.9519);">_export</span>
<span class="t" style="top:28.00px;font-size:18.5px;line-height:18.5px;color:#333;left:984.50px;transform:scaleX(0.9632);">_2025-11-10</span>
<span class="t" style="top:29.00px;font-size:15.5px;line-height:15.5px;color:#fff;left:1448.50px;transform:scaleX(0.8218);">SB</span>
<span class="t" style="top:28.00px;font-size:17px;line-height:17px;color:#fff;left:1555.00px;transform:scaleX(0.9260);">Buy Microsoft 365</span>
<span class="t" style="top:87.00px;font-size:19px;line-height:19px;color:#3b3b3b;left:31.50px;transform:scaleX(0.9633);">File</span>
<span class="t" style="top:87.00px;font-size:19px;line-height:19px;color:#242424;font-weight:700;left:100.50px;transform:scaleX(1.0417);">Home</span>
<span class="t" style="top:87.00px;font-size:19px;line-height:19px;color:#3b3b3b;left:187.50px;transform:scaleX(0.9888);">Insert</span>
<span class="t" style="top:87.00px;font-size:19px;line-height:19px;color:#3b3b3b;left:266.50px;transform:scaleX(1.0035);">Draw</span>
<span class="t" style="top:87.00px;font-size:19px;line-height:19px;color:#3b3b3b;left:342.50px;transform:scaleX(0.9840);">Page Layout</span>
<span class="t" style="top:87.00px;font-size:19px;line-height:19px;color:#3b3b3b;left:480.50px;transform:scaleX(1.0039);">Formulas</span>
<span class="t" style="top:87.00px;font-size:19px;line-height:19px;color:#3b3b3b;left:589.50px;transform:scaleX(0.9965);">Data</span>
<span class="t" style="top:87.00px;font-size:19px;line-height:19px;color:#3b3b3b;left:660.50px;transform:scaleX(0.9629);">Review</span>
<span class="t" style="top:87.00px;font-size:19px;line-height:19px;color:#3b3b3b;left:751.00px;transform:scaleX(1.0038);">View</span>
<span class="t" style="top:87.00px;font-size:19px;line-height:19px;color:#3b3b3b;left:822.50px;transform:scaleX(1.0236);">Help</span>
<span class="t" style="top:87.00px;font-size:19px;line-height:19px;color:#4a4a4a;left:959.00px;transform:scaleX(1.0492);">Tell me what you want to do</span>
<span class="t" style="top:86.00px;font-size:19px;line-height:19px;color:#242424;left:1681.50px;transform:scaleX(1.0124);">Comments</span>
<span class="t" style="top:86.00px;font-size:19px;line-height:19px;color:#fff;font-weight:700;left:1828.50px;transform:scaleX(0.9089);">Share</span>
<span class="t" style="top:185.00px;font-size:17.5px;line-height:17.5px;color:#242424;left:41.00px;transform:scaleX(0.9050);">Paste</span>
<span class="t" style="top:244.00px;font-size:16px;line-height:16px;color:#444;left:51.50px;transform:scaleX(0.9856);">Clipboard</span>
<span class="t" style="top:146.00px;font-size:17.5px;line-height:17.5px;color:#242424;left:194.00px;transform:scaleX(1.0376);">Aptos Narrow</span>
<span class="t" style="top:146.00px;font-size:17.5px;line-height:17.5px;color:#242424;left:379.00px;transform:scaleX(0.8805);">11</span>
<span class="t" style="top:138.00px;font-size:26px;line-height:26px;color:#444;left:449.50px;transform:scaleX(0.9514);">A</span>
<span class="t" style="top:144.00px;font-size:19.5px;line-height:19.5px;color:#444;left:491.00px;transform:scaleX(0.9604);">A</span>
<span class="t" style="top:190.00px;font-size:19.5px;line-height:19.5px;color:#3a3a3a;font-weight:700;left:202.50px;transform:scaleX(0.8160);">B</span>
<span class="t" style="top:189.00px;font-size:20px;line-height:20px;color:#3a3a3a;font-style:italic;font-family:'Liberation Serif', serif;left:243.00px;transform:scaleX(1.1991);">I</span>
<span class="t" style="top:192.00px;font-size:17.5px;line-height:17.5px;color:#3a3a3a;left:279.00px;transform:scaleX(0.9493);">U</span>
<span class="t" style="top:187.00px;font-size:22px;line-height:22px;color:#444;left:470.30px;transform:scaleX(0.9191);">A</span>
<span class="t" style="top:244.00px;font-size:16px;line-height:16px;color:#444;left:325.50px;transform:scaleX(0.9527);">Font</span>
<span class="t" style="top:142.00px;font-size:17px;line-height:17px;color:#444;left:663.00px;transform:scaleX(0.9513);transform:rotate(-45deg) scaleX(.93);transform-origin:50% 50%;">ab</span>
<span class="t" style="top:139.00px;font-size:15px;line-height:15px;color:#444;left:762.00px;transform:scaleX(1.0187);">ab</span>
<span class="t" style="top:151.00px;font-size:15px;line-height:15px;color:#444;left:762.00px;transform:scaleX(0.8667);">c</span>
<span class="t" style="top:244.00px;font-size:16px;line-height:16px;color:#444;left:633.50px;transform:scaleX(1.0048);">Alignment</span>
<span class="t" style="top:146.00px;font-size:17.5px;line-height:17.5px;color:#242424;left:851.00px;transform:scaleX(0.9315);">General</span>
<span class="t" style="top:187.00px;font-size:28px;line-height:28px;color:#444;left:914.50px;transform:scaleX(0.9435);">%</span>
<span class="t" style="top:188.00px;font-size:13px;line-height:13px;color:#444;left:1012.00px;transform:scaleX(0.9676);">0</span>
<span class="t" style="top:200.00px;font-size:13px;line-height:13px;color:#444;left:1000.00px;transform:scaleX(1.0510);">.00</span>
<span class="t" style="top:188.00px;font-size:13px;line-height:13px;color:#444;left:1039.00px;transform:scaleX(1.0510);">.00</span>
<span class="t" style="top:200.00px;font-size:13px;line-height:13px;color:#444;left:1051.00px;transform:scaleX(0.9676);">0</span>
<span class="t" style="top:244.00px;font-size:16px;line-height:16px;color:#444;left:915.00px;transform:scaleX(0.9841);">Number</span>
<span class="t" style="top:134.00px;font-size:17.5px;line-height:17.5px;color:#6e6e6e;left:1125.50px;transform:scaleX(1.0366);">Conditional Formatting</span>
<span class="t" style="top:173.00px;font-size:17.5px;line-height:17.5px;color:#242424;left:1126.00px;transform:scaleX(0.9788);">Format as Table</span>
<span class="t" style="top:212.00px;font-size:17.5px;line-height:17.5px;color:#242424;left:1126.00px;transform:scaleX(0.9193);">Cell Styles</span>
<span class="t" style="top:245.00px;font-size:16px;line-height:16px;color:#444;left:1194.00px;transform:scaleX(0.8720);">Styles</span>
<span class="t" style="top:134.00px;font-size:17.5px;line-height:17.5px;color:#242424;left:1401.00px;transform:scaleX(0.9936);">Insert</span>
<span class="t" style="top:173.00px;font-size:17.5px;line-height:17.5px;color:#242424;left:1401.00px;transform:scaleX(0.9586);">Delete</span>
<span class="t" style="top:212.00px;font-size:17.5px;line-height:17.5px;color:#242424;left:1401.00px;transform:scaleX(0.9921);">Format</span>
<span class="t" style="top:245.00px;font-size:16px;line-height:16px;color:#444;left:1414.00px;transform:scaleX(0.8998);">Cells</span>
<span class="t" style="top:130.00px;font-size:23px;line-height:23px;color:#1e8bcd;left:1606.50px;transform:scaleX(0.9776);">A</span>
<span class="t" style="top:152.00px;font-size:22px;line-height:22px;color:#444;left:1607.00px;transform:scaleX(1.0407);">Z</span>
<span class="t" style="top:183.00px;font-size:17.5px;line-height:17.5px;color:#242424;left:1602.50px;transform:scaleX(1.0588);">Sort &amp;</span>
<span class="t" style="top:207.00px;font-size:17.5px;line-height:17.5px;color:#242424;left:1602.00px;transform:scaleX(0.9642);">Filter</span>
<span class="t" style="top:183.00px;font-size:17.5px;line-height:17.5px;color:#242424;left:1673.00px;transform:scaleX(1.0182);">Find &amp;</span>
<span class="t" style="top:207.00px;font-size:17.5px;line-height:17.5px;color:#242424;left:1667.50px;transform:scaleX(0.9252);">Select</span>
<span class="t" style="top:245.00px;font-size:16px;line-height:16px;color:#444;left:1604.00px;transform:scaleX(0.9607);">Editing</span>
<span class="t" style="top:183.00px;font-size:17.5px;line-height:17.5px;color:#777;left:1762.50px;transform:scaleX(1.0363);">Add-ins</span>
<span class="t" style="top:245.00px;font-size:16px;line-height:16px;color:#444;left:1766.00px;transform:scaleX(0.9585);">Add-ins</span>
<span class="t" style="top:283.00px;font-size:17px;line-height:17px;color:#242424;font-weight:700;left:66.80px;transform:scaleX(0.9394);">POSSIBLE DATA LOSS</span>
<span class="t" style="top:282.00px;font-size:18.5px;line-height:18.5px;color:#242424;left:257.50px;transform:scaleX(0.9474);">Some features</span>
<span class="t" style="top:282.00px;font-size:18.5px;line-height:18.5px;color:#242424;left:376.25px;transform:scaleX(1.0153);">might be lost</span>
<span class="t" style="top:282.00px;font-size:18.5px;line-height:18.5px;color:#242424;left:487.50px;transform:scaleX(0.9702);">if you save</span>
<span class="t" style="top:282.00px;font-size:18.5px;line-height:18.5px;color:#242424;left:578.00px;transform:scaleX(1.0035);">this workbook</span>
<span class="t" style="top:282.00px;font-size:18.5px;line-height:18.5px;color:#242424;left:696.25px;transform:scaleX(0.9897);">in the</span>
<span class="t" style="top:282.00px;font-size:18.5px;line-height:18.5px;color:#242424;left:745.75px;transform:scaleX(1.0045);">comma-delimited</span>
<span class="t" style="top:282.00px;font-size:18.5px;line-height:18.5px;color:#242424;left:892.00px;transform:scaleX(0.9451);">(.csv) format.</span>
<span class="t" style="top:282.00px;font-size:18.5px;line-height:18.5px;color:#242424;left:999.30px;transform:scaleX(0.9280);">To preserve</span>
<span class="t" style="top:282.00px;font-size:18.5px;line-height:18.5px;color:#242424;left:1093.75px;transform:scaleX(0.9314);">these features,</span>
<span class="t" style="top:282.00px;font-size:18.5px;line-height:18.5px;color:#242424;left:1212.50px;transform:scaleX(0.9399);">save it in an</span>
<span class="t" style="top:282.00px;font-size:18.5px;line-height:18.5px;color:#242424;left:1310.00px;transform:scaleX(0.9411);">Excel file format.</span>
<span class="t" style="top:281.00px;font-size:18.5px;line-height:18.5px;color:#242424;left:1470.00px;transform:scaleX(0.9763);">Don&#x27;t show again</span>
<span class="t" style="top:281.00px;font-size:18.5px;line-height:18.5px;color:#242424;left:1651.50px;transform:scaleX(0.8824);">Save As...</span>
<span class="t" style="top:332.00px;font-size:19px;line-height:19px;color:#242424;left:20.00px;transform:scaleX(0.9878);">D2</span>
<span class="t" style="top:326.00px;font-size:27px;line-height:27px;color:#3a3a3a;font-style:italic;font-family:'Liberation Serif', serif;left:277.00px;transform:scaleX(1.2640);-webkit-text-stroke:0.45px #3a3a3a;">f</span>
<span class="t" style="top:331.00px;font-size:21.5px;line-height:21.5px;color:#3a3a3a;font-style:italic;font-family:'Liberation Serif', serif;left:284.50px;transform:scaleX(1.2046);-webkit-text-stroke:0.45px #3a3a3a;">x</span>
<span class="t" style="top:333.00px;font-size:19.5px;line-height:19.5px;color:#242424;left:327.30px;transform:scaleX(0.9855);">Reverting Points</span>
<span class="t" style="top:333.00px;font-size:19.5px;line-height:19.5px;color:#242424;left:473.30px;transform:scaleX(1.0325);">and automatically</span>
<span class="t" style="top:333.00px;font-size:19.5px;line-height:19.5px;color:#242424;left:635.00px;">disabling â‚</span>
<span class="t" style="top:333.00px;font-size:19.5px;line-height:19.5px;color:#242424;left:741.00px;transform:scaleX(1.0023);">200 Off coupon</span>
<span class="t" style="top:331.00px;font-size:11px;line-height:11px;color:#242424;left:734.80px;transform:scaleX(0.7510);">1</span>
<span class="t" style="top:377.00px;font-size:18.5px;line-height:18.5px;color:#444;left:81.50px;transform:scaleX(0.9722);">A</span>
<span class="t" style="top:377.00px;font-size:18.5px;line-height:18.5px;color:#444;left:178.25px;transform:scaleX(0.8506);">B</span>
<span class="t" style="top:377.00px;font-size:18.5px;line-height:18.5px;color:#444;left:274.00px;transform:scaleX(0.8224);">C</span>
<span class="t" style="top:377.00px;font-size:18.5px;line-height:18.5px;color:#1d6b40;left:487.75px;transform:scaleX(0.9346);">D</span>
<span class="t" style="top:377.00px;font-size:18.5px;line-height:18.5px;color:#444;left:722.75px;transform:scaleX(0.7696);">E</span>
<span class="t" style="top:377.00px;font-size:18.5px;line-height:18.5px;color:#444;left:838.00px;transform:scaleX(0.7956);">F</span>
<span class="t" style="top:377.00px;font-size:18.5px;line-height:18.5px;color:#444;left:932.25px;transform:scaleX(0.8686);">G</span>
<span class="t" style="top:377.00px;font-size:18.5px;line-height:18.5px;color:#444;left:1028.25px;transform:scaleX(0.9346);">H</span>
<span class="t" style="top:377.00px;font-size:18.5px;line-height:18.5px;color:#444;left:1129.00px;transform:scaleX(0.5836);">I</span>
<span class="t" style="top:377.00px;font-size:18.5px;line-height:18.5px;color:#444;left:1223.00px;transform:scaleX(0.7568);">J</span>
<span class="t" style="top:405.00px;font-size:18.5px;line-height:18.5px;color:#444;left:14.60px;transform:scaleX(0.9712);">1</span>
<span class="t" style="top:434.00px;font-size:18.5px;line-height:18.5px;color:#1d6b40;left:14.60px;transform:scaleX(0.9712);">2</span>
<span class="t" style="top:463.00px;font-size:18.5px;line-height:18.5px;color:#444;left:14.60px;transform:scaleX(0.9712);">3</span>
<span class="t" style="top:492.00px;font-size:18.5px;line-height:18.5px;color:#444;left:14.60px;transform:scaleX(0.9712);">4</span>
<span class="t" style="top:521.00px;font-size:18.5px;line-height:18.5px;color:#444;left:14.60px;transform:scaleX(0.9712);">5</span>
<span class="t" style="top:550.00px;font-size:18.5px;line-height:18.5px;color:#444;left:14.60px;transform:scaleX(0.9712);">6</span>
<span class="t" style="top:579.00px;font-size:18.5px;line-height:18.5px;color:#444;left:14.60px;transform:scaleX(0.9712);">7</span>
<span class="t" style="top:608.00px;font-size:18.5px;line-height:18.5px;color:#444;left:14.60px;transform:scaleX(0.9712);">8</span>
<span class="t" style="top:637.00px;font-size:18.5px;line-height:18.5px;color:#444;left:14.60px;transform:scaleX(0.9712);">9</span>
<span class="t" style="top:666.00px;font-size:18.5px;line-height:18.5px;color:#444;left:10.00px;transform:scaleX(1.0205);">10</span>
<span class="t" style="top:695.00px;font-size:18.5px;line-height:18.5px;color:#444;left:10.00px;transform:scaleX(1.0927);">11</span>
<span class="t" style="top:724.00px;font-size:18.5px;line-height:18.5px;color:#444;left:10.00px;transform:scaleX(1.0205);">12</span>
<span class="t" style="top:753.00px;font-size:18.5px;line-height:18.5px;color:#444;left:10.00px;transform:scaleX(1.0205);">13</span>
<span class="t" style="top:782.00px;font-size:18.5px;line-height:18.5px;color:#444;left:10.00px;transform:scaleX(1.0205);">14</span>
<span class="t" style="top:811.00px;font-size:18.5px;line-height:18.5px;color:#444;left:10.00px;transform:scaleX(1.0205);">15</span>
<span class="t" style="top:840.00px;font-size:18.5px;line-height:18.5px;color:#444;left:10.00px;transform:scaleX(1.0205);">16</span>
<span class="t" style="top:869.00px;font-size:18.5px;line-height:18.5px;color:#444;left:10.00px;transform:scaleX(1.0205);">17</span>
<span class="t" style="top:898.00px;font-size:18.5px;line-height:18.5px;color:#444;left:10.00px;transform:scaleX(1.0205);">18</span>
<span class="t" style="top:404.00px;font-size:19.5px;line-height:19.5px;color:#000;left:43.70px;transform:scaleX(0.9811);">lead_id</span>
<span class="t" style="top:404.00px;font-size:19.5px;line-height:19.5px;color:#000;left:139.90px;transform:scaleX(1.0255);">email</span>
<span class="t" style="top:404.00px;font-size:19.5px;line-height:19.5px;color:#000;left:235.50px;transform:scaleX(1.0182);">mobile</span>
<span class="t" style="top:404.00px;font-size:19.5px;line-height:19.5px;color:#000;left:332.00px;transform:scaleX(1.0870);">title</span>
<span class="t" style="top:404.00px;font-size:19.5px;line-height:19.5px;color:#000;left:665.00px;transform:scaleX(1.0391);">description</span>
<span class="t" style="top:404.00px;font-size:19.5px;line-height:19.5px;color:#000;left:798.60px;transform:scaleX(1.0270);">amount</span>
<span class="t" style="top:404.00px;font-size:19.5px;line-height:19.5px;color:#000;left:894.80px;transform:scaleX(0.9838);clip-path:inset(-5px 4.57px -5px 0);">closing_bal</span>
<span class="t" style="top:404.00px;font-size:19.5px;line-height:19.5px;color:#000;left:990.70px;transform:scaleX(1.0242);">operation</span>
<span class="t" style="top:404.00px;font-size:19.5px;line-height:19.5px;color:#000;left:1086.70px;transform:scaleX(0.9848);">type</span>
<span class="t" style="top:404.00px;font-size:19.5px;line-height:19.5px;color:#000;left:1182.70px;transform:scaleX(1.0146);clip-path:inset(-5px 2.17px -5px 0);">created_at</span>
<span class="t" style="top:404.00px;font-size:19.5px;line-height:19.5px;color:#000;left:1278.70px;transform:scaleX(0.9959);">expires_at</span>
<span class="t" style="top:433.00px;font-size:19.5px;line-height:19.5px;color:#000;left:43.70px;transform:scaleX(1.0054);clip-path:inset(-5px 7.86px -5px 0);">529f5e87-9</span>
<span class="t" style="top:433.00px;font-size:19.5px;line-height:19.5px;color:#000;left:139.90px;transform:scaleX(1.0256);clip-path:inset(-5px 8.78px -5px 0);">shubham.bhatia@nee</span>
<span class="t" style="top:433.00px;font-size:19.5px;line-height:19.5px;color:#000;left:332.00px;transform:scaleX(0.9855);">Reverting Points</span>
<span class="t" style="top:433.00px;font-size:19.5px;line-height:19.5px;color:#000;left:478.00px;transform:scaleX(1.0325);">and automatically</span>
<span class="t" style="top:433.00px;font-size:19.5px;line-height:19.5px;color:#000;left:639.70px;">disabling â‚</span>
<span class="t" style="top:433.00px;font-size:19.5px;line-height:19.5px;color:#000;left:745.70px;transform:scaleX(0.9939);clip-path:inset(-5px 4.53px -5px 0);">200 O</span>
<span class="t" style="top:431.00px;font-size:11px;line-height:11px;color:#000;left:739.50px;transform:scaleX(0.7510);">1</span>
<span class="t" style="top:433.00px;font-size:19.5px;line-height:19.5px;color:#000;left:855.30px;transform:scaleX(0.9525);">200</span>
<span class="t" style="top:433.00px;font-size:19.5px;line-height:19.5px;color:#000;left:951.80px;transform:scaleX(0.9402);">700</span>
<span class="t" style="top:433.00px;font-size:19.5px;line-height:19.5px;color:#000;left:990.70px;transform:scaleX(1.0154);">cr</span>
<span class="t" style="top:433.00px;font-size:19.5px;line-height:19.5px;color:#000;left:1086.70px;transform:scaleX(1.0088);">revert</span>
<span class="t" style="top:433.00px;font-size:19.5px;line-height:19.5px;color:#000;left:1182.70px;transform:scaleX(1.0223);clip-path:inset(-5px 10.37px -5px 0);">2025-11-07</span>
<span class="t" style="top:433.00px;font-size:19.5px;line-height:19.5px;color:#000;left:1278.70px;transform:scaleX(0.9958);clip-path:inset(-5px 0.70px -5px 0);">2026-05-07T0</span>
<span class="t" style="top:939.00px;font-size:19.5px;line-height:19.5px;color:#242424;left:178.50px;transform:scaleX(1.0788);-webkit-text-stroke:0.55px #242424;">595b116a-38cb-4033-bcd6-1b8d7e0</span>
<span class="t" style="top:985.00px;font-size:15.5px;line-height:15.5px;color:#444;left:17.50px;transform:scaleX(0.9372);">Ready</span>
<span class="t" style="top:985.00px;font-size:15.5px;line-height:15.5px;color:#444;left:115.00px;transform:scaleX(0.9883);">Accessibility: Unavailable</span>
<span class="t" style="top:985.00px;font-size:16px;line-height:16px;color:#444;left:1869.00px;transform:scaleX(0.9408);">100%</span>
<span class="t" style="top:1021.00px;font-size:15.5px;line-height:15.5px;color:#fff;left:54.55px;transform:scaleX(0.7536);">1</span>
<span class="t" style="top:1024.00px;font-size:17px;line-height:17px;color:#fff;left:77.50px;transform:scaleX(1.0500);">Air: Satisfactory</span>
<span class="t" style="top:1048.00px;font-size:17px;line-height:17px;color:#c8c8c8;left:77.50px;transform:scaleX(1.0921);">Tomorrow</span>
<span class="t" style="top:1035.00px;font-size:20.5px;line-height:20.5px;color:#5a5a5a;left:630.00px;transform:scaleX(0.9235);">Search</span>
<span class="t" style="top:1025.00px;font-size:17px;line-height:17px;color:#fff;left:1615.00px;transform:scaleX(0.9364);">ENG</span>
<span class="t" style="top:1048.00px;font-size:17px;line-height:17px;color:#fff;left:1623.00px;transform:scaleX(1.0588);">IN</span>
<span class="t" style="top:1024.00px;font-size:17px;line-height:17px;color:#fff;left:1847.00px;transform:scaleX(1.0342);">18:49</span>
<span class="t" style="top:1048.00px;font-size:17px;line-height:17px;color:#fff;left:1797.00px;transform:scaleX(1.0968);">10-11-2025</span>
</body></html>
